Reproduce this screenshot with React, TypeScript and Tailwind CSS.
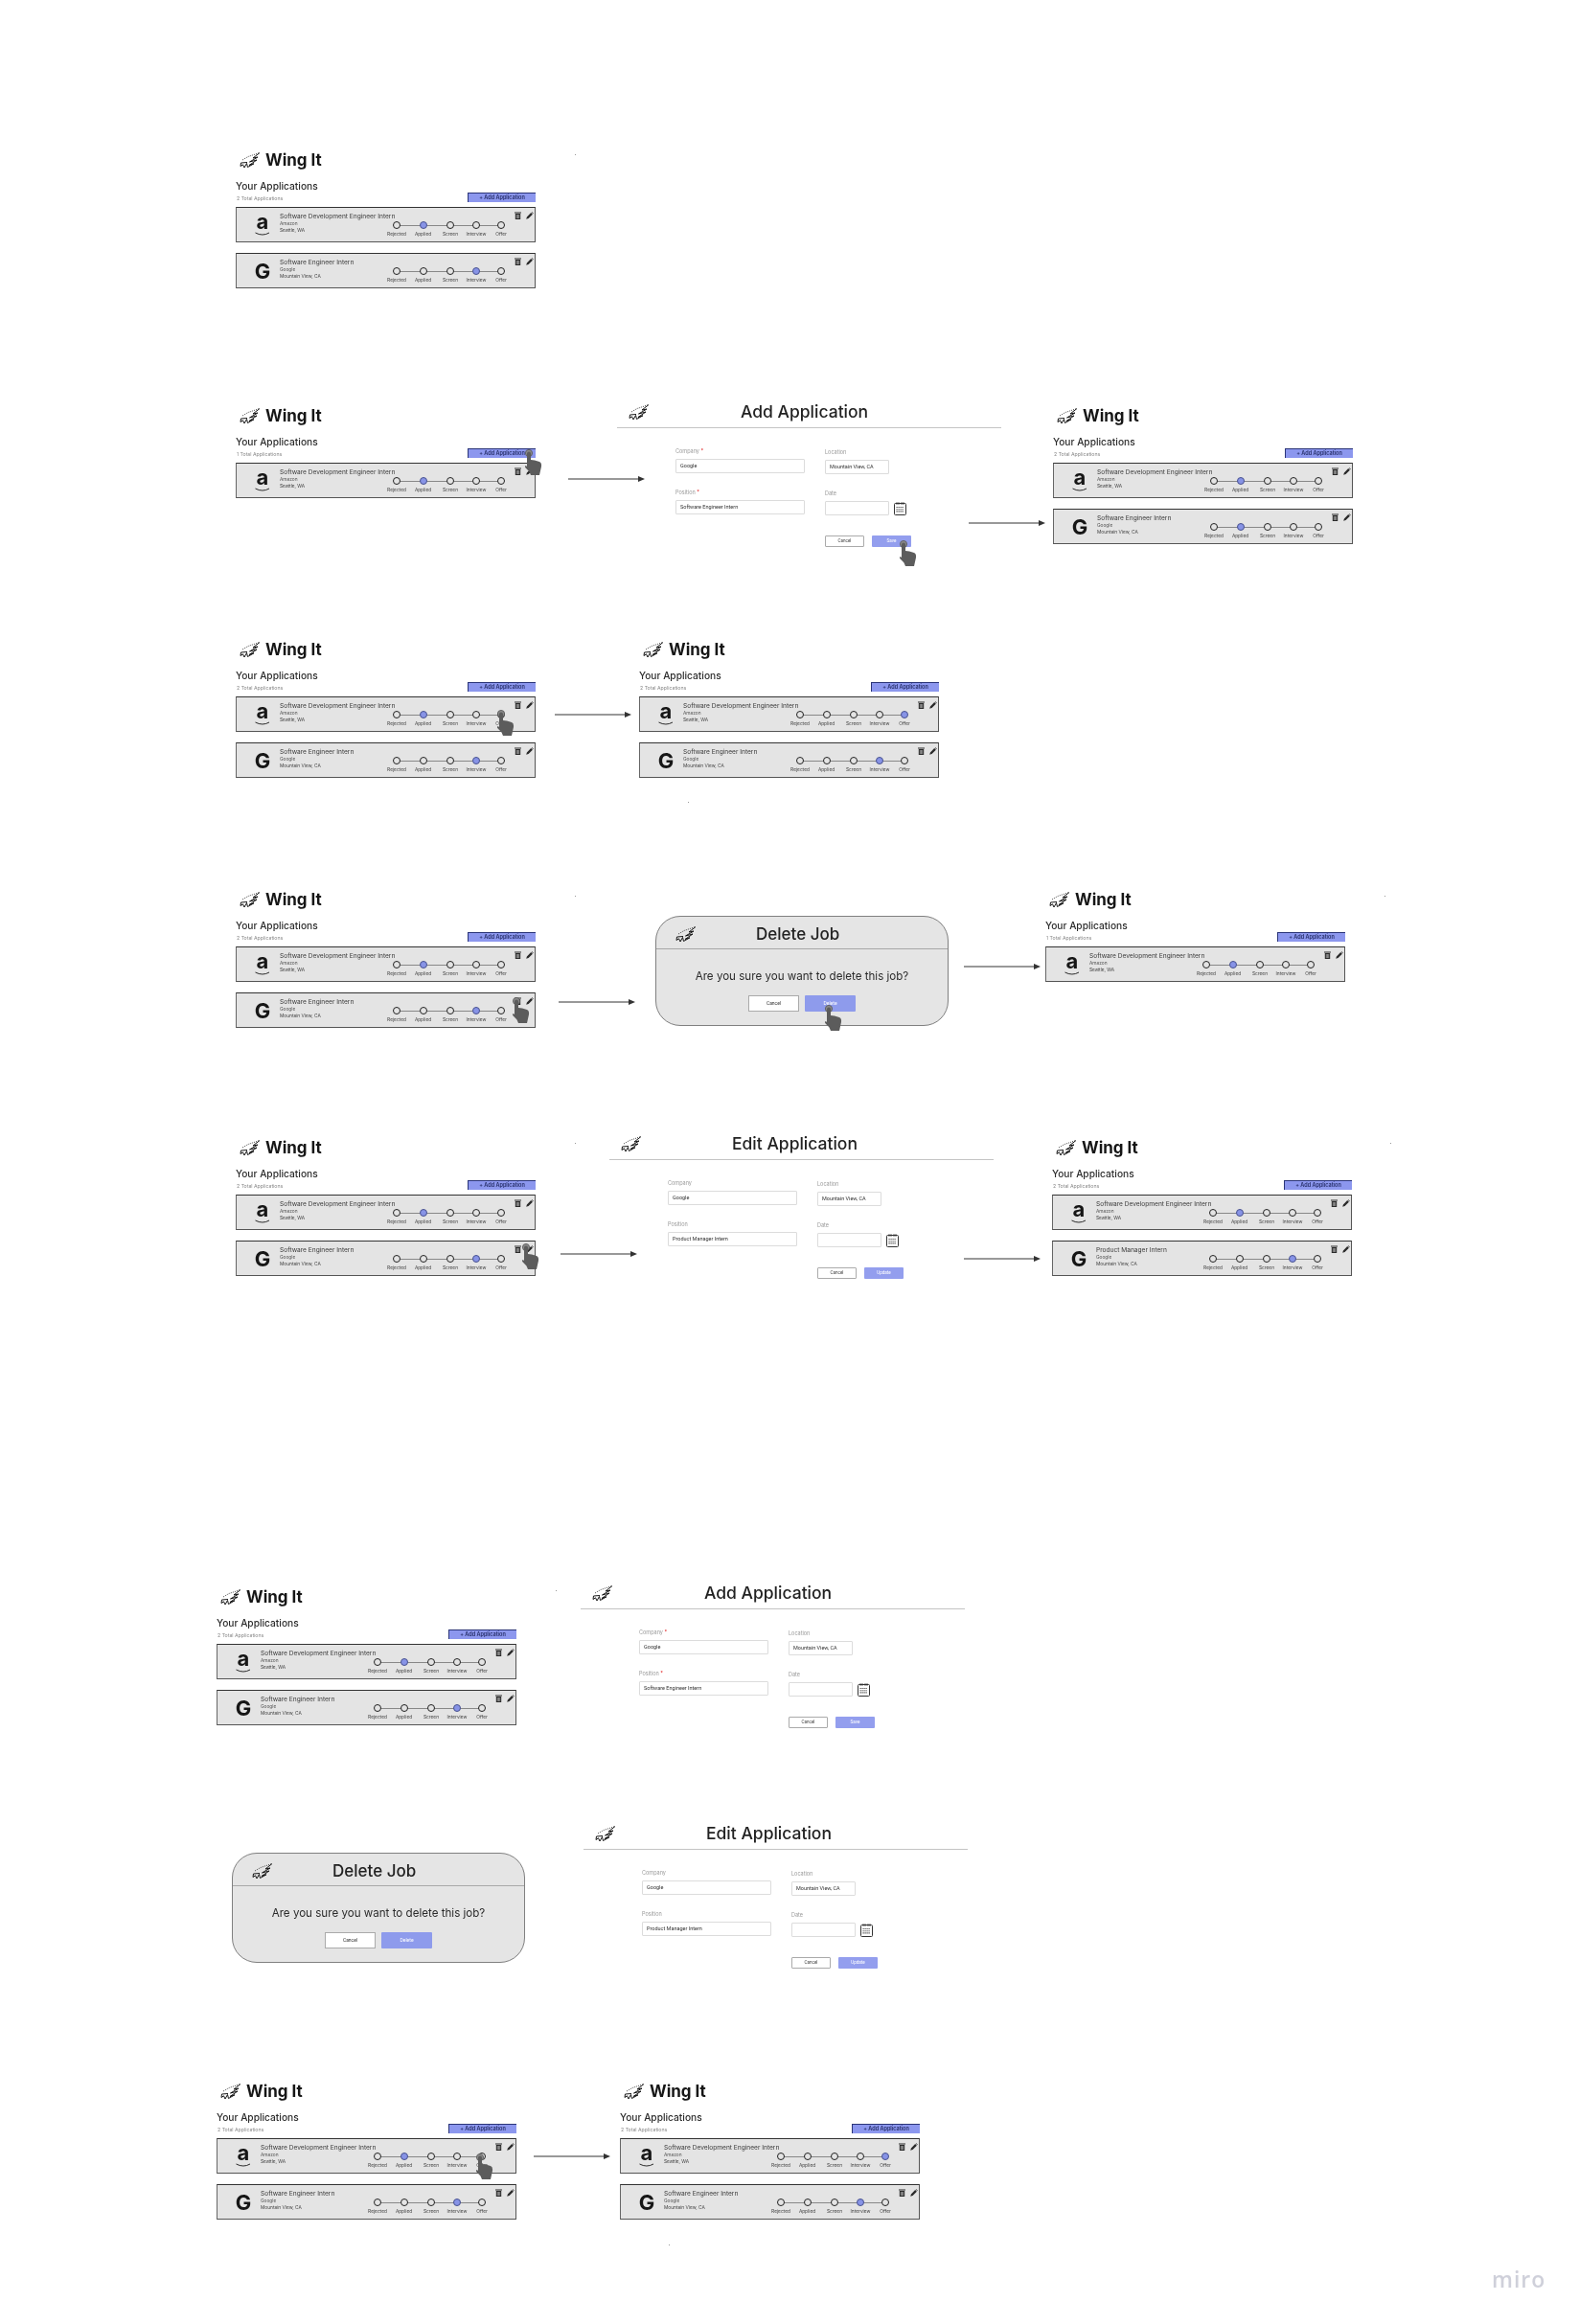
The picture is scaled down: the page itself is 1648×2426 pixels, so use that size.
type Status = "Rejected" | "Applied" | "Screen" | "Interview" | "Offer";

interface Job {
  title: string;
  company: string;
  location: string;
  logo: "a" | "G";
  status: Status;
}

const amazon: Job = {
  title: "Software Development Engineer Intern",
  company: "Amazon",
  location: "Seattle, WA",
  logo: "a",
  status: "Applied",
};
const google: Job = {
  title: "Software Engineer Intern",
  company: "Google",
  location: "Mountain View, CA",
  logo: "G",
  status: "Interview",
};

const STEPS: { name: Status; cell: string }[] = [
  { name: "Rejected", cell: "w-[26px]" },
  { name: "Applied", cell: "w-[29px]" },
  { name: "Screen", cell: "w-[28px]" },
  { name: "Interview", cell: "w-[26px]" },
  { name: "Offer", cell: "w-[26px]" },
];

const BOARDS: { pos: string; total: number; jobs: Job[] }[] = [
  { pos: "left-[246px] top-[155px]", total: 2, jobs: [amazon, google] },
  { pos: "left-[246px] top-[422px]", total: 1, jobs: [amazon] },
  { pos: "left-[1099px] top-[422px]", total: 2, jobs: [amazon, { ...google, status: "Applied" }] },
  { pos: "left-[246px] top-[666px]", total: 2, jobs: [amazon, google] },
  { pos: "left-[667px] top-[666px]", total: 2, jobs: [{ ...amazon, status: "Offer" }, google] },
  { pos: "left-[246px] top-[927px]", total: 2, jobs: [amazon, google] },
  { pos: "left-[1091px] top-[927px]", total: 1, jobs: [amazon] },
  { pos: "left-[246px] top-[1186px]", total: 2, jobs: [amazon, google] },
  { pos: "left-[1098px] top-[1186px]", total: 2, jobs: [amazon, { ...google, title: "Product Manager Intern" }] },
  { pos: "left-[226px] top-[1655px]", total: 2, jobs: [amazon, google] },
  { pos: "left-[226px] top-[2171px]", total: 2, jobs: [amazon, google] },
  { pos: "left-[647px] top-[2171px]", total: 2, jobs: [{ ...amazon, status: "Offer" }, google] },
];

const FORMS: { pos: string; mode: "add" | "edit" }[] = [
  { pos: "left-[644px] top-[415px]", mode: "add" },
  { pos: "left-[636px] top-[1179px]", mode: "edit" },
  { pos: "left-[606px] top-[1648px]", mode: "add" },
  { pos: "left-[609px] top-[1899px]", mode: "edit" },
];

const DIALOGS = ["left-[684px] top-[956px]", "left-[242px] top-[1934px]"];

const ARROWS = [
  "left-[593px] top-[496px]",
  "left-[1011px] top-[542px]",
  "left-[579px] top-[742px]",
  "left-[583px] top-[1042px]",
  "left-[1006px] top-[1005px]",
  "left-[585px] top-[1305px]",
  "left-[1006px] top-[1310px]",
  "left-[557px] top-[2247px]",
];

// finger tip sits 5px right and 4px down from the box corner
const HANDS = [
  "left-[547px] top-[469px]",
  "left-[938px] top-[564px]",
  "left-[518px] top-[741px]",
  "left-[534px] top-[1041px]",
  "left-[860px] top-[1049px]",
  "left-[544px] top-[1298px]",
  "left-[496px] top-[2248px]",
];

const SPECKS = [
  "left-[600px] top-[161px]",
  "left-[718px] top-[837px]",
  "left-[600px] top-[935px]",
  "left-[1445px] top-[935px]",
  "left-[600px] top-[1193px]",
  "left-[1451px] top-[1193px]",
  "left-[580px] top-[1660px]",
  "left-[698px] top-[2343px]",
];

const WingLogo = () => (
  <svg width="22" height="17" viewBox="0 0 22 17" fill="none" className="shrink-0">
    <path d="M3 8 L9 4.5 L15 2.5 L21 0.5" stroke="#111" strokeWidth="0.8" strokeDasharray="1 1.2" />
    <path
      d="M21 0.5 L14 6 L19 5 L10.5 10 L18 8 L10 13.5 L15 11.8 L8.5 15.5 L7.5 11.5 L5 16 L3.5 12.8 L1 14.5 L1.5 11 L8 10.5"
      stroke="#0c0c0c"
      strokeWidth="0.95"
      strokeLinejoin="round"
    />
  </svg>
);

const TrashIcon = () => (
  <svg width="7" height="8" viewBox="0 0 7 8">
    <path d="M0 0.4 H7 V1.4 H0 Z M0.8 2 H6.2 V8 H0.8 Z" fill="#2b2b2b" />
    <path d="M2.3 3 V7 M3.5 3 V7 M4.7 3 V7" stroke="#e4e4e4" strokeWidth="0.5" />
  </svg>
);

const PencilIcon = () => (
  <svg width="8" height="8" viewBox="0 0 8 8">
    <path d="M0.2 7.8 L0.9 5.4 L5.2 1.1 L6.9 2.8 L2.6 7.1 Z M5.7 0.6 L6.3 0.2 L7.8 1.7 L7.4 2.3 Z" fill="#2b2b2b" />
  </svg>
);

const CalendarIcon = () => (
  <svg width="13" height="14" viewBox="0 0 13 14" fill="none" className="shrink-0">
    <rect x="0.5" y="1.5" width="12" height="12" rx="1" stroke="#333" />
    <path d="M3 0 V3 M5 0 V3 M8 0 V3 M10 0 V3" stroke="#333" strokeWidth="0.7" />
    <path d="M2.5 5.5 H10.5 M2.5 7.7 H10.5 M2.5 9.9 H10.5" stroke="#444" strokeWidth="1.1" strokeDasharray="1.2 0.8" />
  </svg>
);

const Hand = ({ pos }: { pos: string }) => (
  <svg width="20" height="30" viewBox="0 0 20 30" className={`absolute ${pos}`}>
    <circle cx="5" cy="4" r="3.6" fill="#8a8a8a" stroke="#555" strokeWidth="0.8" />
    <path
      d="M3 4.5 a2 2 0 0 1 4 0 V11 L11 11.6 L16 13 Q18.5 14 18 18 L16 27 H7 L5.5 23.5 L1.2 19 Q0.4 17.4 1.8 17 L3 18 Z"
      fill="#5c5c5c"
    />
  </svg>
);

const Arrow = ({ pos }: { pos: string }) => (
  <svg width="80" height="8" viewBox="0 0 80 8" className={`absolute ${pos}`}>
    <path d="M0 4 H74" stroke="#333" strokeWidth="1" />
    <path d="M73 1 L80 4 L73 7 Z" fill="#333" />
  </svg>
);

const JobLogo = ({ logo }: { logo: Job["logo"] }) => (
  <div className="relative flex w-[46px] shrink-0 items-center justify-center pl-[8px] font-['Inter',sans-serif] text-[#161616]">
    {logo === "a" ? (
      <>
        <span className="mt-[-7px] text-[22px] leading-none font-bold">a</span>
        <svg width="16" height="5" viewBox="0 0 16 5" fill="none" className="absolute top-[25px] left-[19px]">
          <path d="M0.5 1 Q8 5 15 1" stroke="#161616" strokeWidth="0.9" />
        </svg>
      </>
    ) : (
      <span className="text-[22px] leading-none font-bold">G</span>
    )}
  </div>
);

const Timeline = ({ status }: { status: Status }) => (
  <div className="relative flex w-[135px] shrink-0 pt-[14px]">
    <div className="absolute top-[17.5px] right-[13px] left-[13px] h-px bg-[#888]" />
    {STEPS.map((step) => (
      <div key={step.name} className={`relative flex flex-col items-center ${step.cell}`}>
        <div
          className={
            step.name === status
              ? "h-[8px] w-[8px] rounded-full border border-[#49528f] bg-[#8793e6]"
              : "h-[8px] w-[8px] rounded-full border border-[#222] bg-[#e4e4e4]"
          }
        />
        <span className="mt-[1.5px] text-[4.8px] leading-[6px] whitespace-nowrap text-[#444]">{step.name}</span>
      </div>
    ))}
  </div>
);

const JobCard = ({ job }: { job: Job }) => (
  <div className="flex h-[37px] w-[313px] border-t-[1.5px] border-r border-b-[1.5px] border-l-[1.5px] border-t-[#333] border-r-[#555] border-b-[#555] border-l-[#666] bg-[#e4e4e4]">
    <JobLogo logo={job.logo} />
    <div className="ml-[-1px] w-[109px] shrink-0 pt-[4.5px]">
      <p className="text-[6.6px] leading-[8px] whitespace-nowrap text-[#3a3a3a]">{job.title}</p>
      <p className="mt-[0.5px] text-[4.8px] leading-[7px] text-[#555]">{job.company}</p>
      <p className="text-[4.8px] leading-[7px] text-[#444]">{job.location}</p>
    </div>
    <Timeline status={job.status} />
    <div className="flex gap-[5px] pt-[4px] pl-[1px]">
      <TrashIcon />
      <PencilIcon />
    </div>
  </div>
);

const Board = ({ pos, total, jobs }: { pos: string; total: number; jobs: Job[] }) => (
  <section className={`absolute w-[313px] ${pos}`}>
    <header className="flex h-[24px] items-center gap-[5px] pl-[4px]">
      <WingLogo />
      <h1 className="text-[17px] leading-none font-bold whitespace-nowrap text-[#161616]">Wing It</h1>
    </header>
    <h2 className="mt-[9px] text-[10.2px] leading-[12px] font-medium text-[#2b2b2b]">Your Applications</h2>
    <div className="mt-[1px] flex h-[10px] items-end justify-between">
      <span className="pl-[1px] text-[5.2px] leading-[7px] text-[#888]">{total} Total Applications</span>
      <button className="flex h-[10px] w-[71px] items-center justify-center border-t border-l border-t-[#2b3578] border-l-[#2b3578] bg-[#8c97ee] text-[5.5px] font-semibold text-[#242c66]">
        + Add Application
      </button>
    </div>
    <div className="mt-[5px] flex flex-col gap-[11px]">
      {jobs.map((job) => (
        <JobCard key={job.company} job={job} />
      ))}
    </div>
  </section>
);

const Field = ({ label, value, required, width }: { label: string; value?: string; required?: boolean; width: string }) => (
  <div>
    <label className="block text-[5.5px] leading-[8px] text-[#999]">
      {label}
      {required && <span className="text-[#e02020]"> *</span>}
    </label>
    <div
      className={`mt-[4px] flex h-[15px] items-center rounded-[1px] border border-[#dcdcdc] bg-white pl-[4px] font-['Roboto',sans-serif] text-[5.5px] text-[#333] ${width}`}
    >
      {value}
    </div>
  </div>
);

const AppForm = ({ pos, mode }: { pos: string; mode: "add" | "edit" }) => {
  const isAdd = mode === "add";
  return (
    <section className={`absolute w-[401px] ${pos}`}>
      <header className="flex h-[32px] items-center border-b-[1.5px] border-b-[#c4c4c4] pl-[12px]">
        <WingLogo />
        <h1 className={`text-[17.5px] font-medium whitespace-nowrap text-[#222] ${isAdd ? "ml-[95px]" : "ml-[94px]"}`}>
          {isAdd ? "Add Application" : "Edit Application"}
        </h1>
      </header>
      <div className="flex gap-[21px] pt-[20px] pl-[61px]">
        <div className="flex flex-col gap-[16px]">
          <Field label="Company" required={isAdd} value="Google" width="w-[135px]" />
          <Field
            label="Position"
            required={isAdd}
            value={isAdd ? "Software Engineer Intern" : "Product Manager Intern"}
            width="w-[135px]"
          />
        </div>
        <div className="mt-[1px] flex flex-col gap-[16px]">
          <Field label="Location" value="Mountain View, CA" width="w-[67px]" />
          <div className="flex items-end gap-[5px]">
            <Field label="Date" width="w-[67px]" />
            <CalendarIcon />
          </div>
          <div className="mt-[5px] flex gap-[8px] font-['Roboto',sans-serif] text-[4.6px]">
            <button className="h-[12px] w-[41px] rounded-[1px] border border-[#aaa] bg-white text-[#444]">Cancel</button>
            <button className="h-[12px] w-[41px] rounded-[1px] bg-[#939eee] text-white">{isAdd ? "Save" : "Update"}</button>
          </div>
        </div>
      </div>
    </section>
  );
};

const DeleteDialog = ({ pos }: { pos: string }) => (
  <section className={`absolute h-[115px] w-[306px] rounded-[26px] border border-[#808080] bg-[#e5e5e5] ${pos}`}>
    <header className="flex h-[34px] items-center border-b border-b-[#a8a8a8] pt-[4px] pl-[20px]">
      <WingLogo />
      <h1 className="ml-[62px] text-[17px] font-medium whitespace-nowrap text-[#222]">Delete Job</h1>
    </header>
    <p className="mt-[21px] text-center text-[11.6px] leading-[14px] text-[#2b2b2b]">Are you sure you want to delete this job?</p>
    <div className="mt-[13px] flex justify-center gap-[6px] font-['Roboto',sans-serif] text-[5px]">
      <button className="h-[17px] w-[53px] border border-[#aaa] bg-white text-[#333]">Cancel</button>
      <button className="h-[17px] w-[53px] rounded-[1px] bg-[#8e9bec] text-white">Delete</button>
    </div>
  </section>
);

export default function App() {
  return (
    <div className="relative h-[2426px] w-[1648px] overflow-hidden bg-white font-['Inter',sans-serif] blur-[0.25px]">
      {BOARDS.map((board) => (
        <Board key={board.pos} {...board} />
      ))}
      {FORMS.map((form) => (
        <AppForm key={form.pos} {...form} />
      ))}
      {DIALOGS.map((pos) => (
        <DeleteDialog key={pos} pos={pos} />
      ))}
      {ARROWS.map((pos) => (
        <Arrow key={pos} pos={pos} />
      ))}
      {HANDS.map((pos) => (
        <Hand key={pos} pos={pos} />
      ))}
      {SPECKS.map((pos) => (
        <div key={pos} className={`absolute h-px w-px bg-[#999] ${pos}`} />
      ))}
      <span className="absolute top-[2363px] left-[1557px] font-['Open_Sans',sans-serif] text-[23px] leading-[32px] font-semibold tracking-[1px] text-[#cfd0da]">
        miro
      </span>
    </div>
  );
}
